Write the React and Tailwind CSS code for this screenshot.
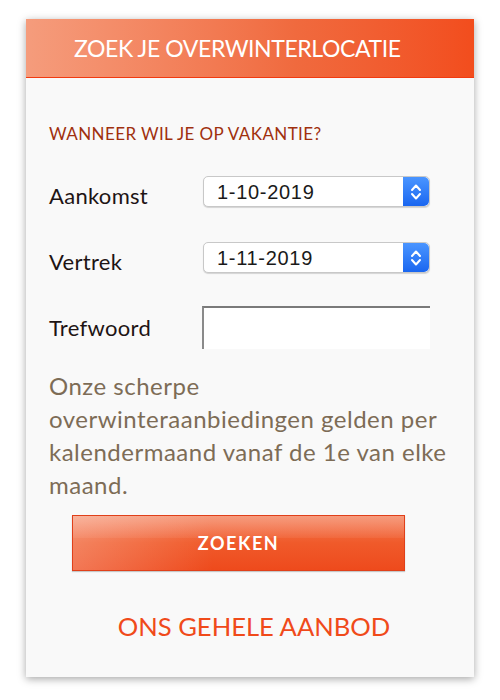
import { useState } from "react";

const DateSelect = ({ value }) => (
  <div className="flex h-[31px] w-[227px] rounded-[5px] border border-[#c8c8c8] bg-white shadow-[0_1px_1px_rgba(0,0,0,0.15)]">
    <div className="flex flex-1 items-center pl-[13px] font-['Liberation_Sans',sans-serif] text-[20px] tracking-[0.7px] text-[#1a1a1a]">
      {value}
    </div>
    <div className="flex w-[26px] items-center justify-center rounded-r-[5px] bg-gradient-to-b from-[#4a95ff] to-[#1a66f0]">
      <svg width="12" height="20" viewBox="0 0 12 20" fill="none" stroke="white" strokeWidth="2" strokeLinecap="round" strokeLinejoin="round">
        <path d="M2 8 L6 3.5 L10 8" />
        <path d="M2 12 L6 16.5 L10 12" />
      </svg>
    </div>
  </div>
);

export default function App() {
  const [keyword, setKeyword] = useState("");

  return (
    <div className="h-[700px] w-[500px] bg-white pt-[19px] font-['Lato',sans-serif]">
      <div className="mx-auto w-[448px] bg-[#f9f9f9] shadow-[0_2px_8px_rgba(0,0,0,0.35)]">
        {/* Header */}
        <div className="flex h-[59px] items-center border-b border-[#f23a10] bg-gradient-to-r from-[#f59c7c] via-[#f06a3e] via-60% to-[#f24d1d] pl-[48px]">
          <h1 className="text-[23px] leading-none tracking-[-0.4px] text-white">ZOEK JE OVERWINTERLOCATIE</h1>
        </div>

        <div className="px-[23px] pb-[37px] pt-[47px]">
          <h2 className="text-[17px] leading-none tracking-[0.4px] text-[#a0300e]">WANNEER WIL JE OP VAKANTIE?</h2>

          <div className="mt-[34px] flex h-[31px] items-center">
            <span className="w-[154px] pt-[9px] text-[22px] leading-none tracking-[0.3px] text-[#1e1414]">Aankomst</span>
            <DateSelect value="1-10-2019" />
          </div>

          <div className="mt-[35px] flex h-[31px] items-center">
            <span className="w-[154px] pt-[9px] text-[22px] leading-none tracking-[0.3px] text-[#1e1414]">Vertrek</span>
            <DateSelect value="1-11-2019" />
          </div>

          <div className="mt-[33px] flex h-[43px] items-center">
            <span className="w-[153px] text-[22px] leading-none tracking-[0.3px] text-[#1e1414]">Trefwoord</span>
            <input
              value={keyword}
              onChange={(e) => setKeyword(e.target.value)}
              className="h-[43px] w-[228px] border-l-2 border-t-2 border-l-[#8a8a8a] border-t-[#7a7a7a] bg-white outline-none"
            />
          </div>

          <p className="mt-[20px] w-[402px] whitespace-nowrap text-[24px] leading-[33px] tracking-[0.5px] text-[#7d6c56]">
            Onze scherpe
            <br />
            overwinteraanbiedingen gelden per
            <br />
            kalendermaand vanaf de 1e van elke
            <br />
            maand.
          </p>

          <button className="relative ml-[23px] mt-[14px] flex h-[56px] w-[333px] items-center justify-center overflow-hidden border border-[#e0401a] bg-gradient-to-b from-[#f47a52] via-[#f05a2a] to-[#ee4a1c] shadow-[0_1px_1px_rgba(0,0,0,0.2)]">
            <span className="absolute inset-x-0 top-0 h-[22px] bg-gradient-to-b from-white/25 to-white/5" />
            <span className="absolute left-0 top-0 h-full w-[140px] bg-gradient-to-r from-white/25 to-transparent" />
            <span className="relative text-[18px] font-bold tracking-[1.6px] text-white">ZOEKEN</span>
          </button>

          <div className="mt-[43px] pl-[8px] text-center leading-none">
            <a className="text-[25.6px] leading-none text-[#f04a1a]">ONS GEHELE AANBOD</a>
          </div>
        </div>
      </div>
    </div>
  );
}
